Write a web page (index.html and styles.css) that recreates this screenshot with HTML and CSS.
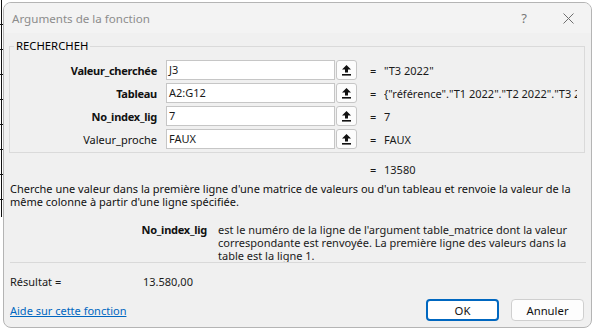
FILE: index.html
```html
<!DOCTYPE html>
<html lang="fr">
<head>
    <meta charset="UTF-8">
    <title>Arguments de la fonction</title>
    <link rel="stylesheet" href="styles.css">
</head>
<body>
    <div class="screen">
        <div class="sheet-edge"></div>

        <div class="dialog">
            <div class="title-bar">
                <span class="title">Arguments de la fonction</span>
                <span class="title-btn help">?</span>
                <span class="title-btn close">
                    <svg width="11" height="11" viewBox="0 0 11 11"><path d="M0.5 0.5 L10.5 10.5 M10.5 0.5 L0.5 10.5" stroke="#6e6e6e" stroke-width="1" fill="none"/></svg>
                </span>
            </div>

            <div class="body">
                <fieldset class="group">
                    <legend>RECHERCHEH</legend>

                    <div class="arg-row">
                        <label class="arg-label bold">Valeur_cherchée</label>
                        <div class="field"><span class="input">J3</span><span class="ref-btn"><svg width="11" height="12" viewBox="0 0 11 12"><path d="M5.5 1 L10 5.5 H7 V8.5 H4 V5.5 H1 Z" fill="#111"/><rect x="1" y="10" width="9" height="1.6" fill="#111"/></svg></span></div>
                        <span class="eq">=</span>
                        <span class="value">"T3 2022"</span>
                    </div>

                    <div class="arg-row">
                        <label class="arg-label bold">Tableau</label>
                        <div class="field"><span class="input">A2:G12</span><span class="ref-btn"><svg width="11" height="12" viewBox="0 0 11 12"><path d="M5.5 1 L10 5.5 H7 V8.5 H4 V5.5 H1 Z" fill="#111"/><rect x="1" y="10" width="9" height="1.6" fill="#111"/></svg></span></div>
                        <span class="eq">=</span>
                        <span class="value">{"référence"."T1 2022"."T2 2022"."T3 20</span>
                    </div>

                    <div class="arg-row">
                        <label class="arg-label bold">No_index_lig</label>
                        <div class="field"><span class="input">7</span><span class="ref-btn"><svg width="11" height="12" viewBox="0 0 11 12"><path d="M5.5 1 L10 5.5 H7 V8.5 H4 V5.5 H1 Z" fill="#111"/><rect x="1" y="10" width="9" height="1.6" fill="#111"/></svg></span></div>
                        <span class="eq">=</span>
                        <span class="value">7</span>
                    </div>

                    <div class="arg-row">
                        <label class="arg-label">Valeur_proche</label>
                        <div class="field"><span class="input">FAUX</span><span class="ref-btn"><svg width="11" height="12" viewBox="0 0 11 12"><path d="M5.5 1 L10 5.5 H7 V8.5 H4 V5.5 H1 Z" fill="#111"/><rect x="1" y="10" width="9" height="1.6" fill="#111"/></svg></span></div>
                        <span class="eq">=</span>
                        <span class="value">FAUX</span>
                    </div>
                </fieldset>

                <div class="result-row">
                    <span class="eq">=</span>
                    <span class="value">13580</span>
                </div>

                <p class="summary">Cherche une valeur dans la première ligne d'une matrice de valeurs ou d'un tableau et renvoie la valeur de la même colonne à partir d'une ligne spécifiée.</p>

                <div class="arg-help">
                    <span class="arg-help-name">No_index_lig</span>
                    <span class="arg-help-text">est le numéro de la ligne de l'argument table_matrice dont la valeur correspondante est renvoyée. La première ligne des valeurs dans la table est la ligne 1.</span>
                </div>

                <div class="separator"></div>

                <div class="final-row">
                    <span class="final-label">Résultat =</span>
                    <span class="final-value">13.580,00</span>
                </div>

                <div class="footer">
                    <a class="help-link" href="#">Aide sur cette fonction</a>
                    <button class="btn primary">OK</button>
                    <button class="btn">Annuler</button>
                </div>
            </div>
        </div>
    </div>
</body>
</html>
```

FILE: styles.css
```css
html, body {
    margin: 0;
    padding: 0;
    background: #ffffff;
}
body {
    font-family: "Noto Sans", "Open Sans", sans-serif;
    font-size: 11px;
    color: #1a1a1a;
    width: 594px;
    height: 328px;
    overflow: hidden;
}
.screen {
    display: flex;
    align-items: flex-start;
    height: 328px;
}
.sheet-edge {
    width: 3px;
    height: 217px;
    flex-shrink: 0;
    background:
        linear-gradient(to right, transparent 1px, #111 1px, #111 2px, transparent 2px),
        repeating-linear-gradient(to bottom, transparent 0, transparent 24px, #111 24px, #111 25px);
}
.dialog {
    width: 587px;
    height: 324px;
    margin-top: 2px;
    border: 1px solid #b4b4b4;
    border-radius: 8px;
    background: #f0f0f0;
    overflow: hidden;
    display: flex;
    flex-direction: column;
}
.title-bar {
    height: 30px;
    background: #f3f3f3;
    display: flex;
    align-items: center;
    padding-left: 8px;
    flex-shrink: 0;
}
.title {
    color: #8c8c8c;
    font-size: 11.6px;
    flex: 1;
}
.title-btn {
    color: #777;
    display: flex;
    align-items: center;
    justify-content: center;
}
.help {
    font-size: 13px;
    margin-right: 36px;
}
.close {
    margin-right: 17px;
}
.body {
    padding: 0 5px;
    display: flex;
    flex-direction: column;
}
.group {
    margin: 5px 0 0 0;
    padding: 0 0 3px 0;
    border: 1px solid #dadada;
    width: 574px;
}
.group legend {
    margin-left: 4px;
    padding: 0 2px;
    color: #000;
    font-size: 11.3px;
    line-height: 16px;
}
.arg-row {
    display: flex;
    align-items: center;
    height: 20px;
    margin-top: 3px;
}
.arg-row:first-of-type {
    margin-top: 6px;
}
.arg-label {
    width: 147px;
    margin-right: 9px;
    text-align: right;
    color: #111;
}
.bold {
    font-weight: bold;
    letter-spacing: -0.25px;
}
.field {
    display: flex;
    width: 191px;
    height: 20px;
}
.input {
    width: 167px;
    height: 18px;
    line-height: 18px;
    padding-left: 2px;
    background: #fff;
    border: 1px solid #c6c6c6;
}
.ref-btn {
    width: 19px;
    height: 18px;
    margin-left: 1px;
    border: 1px solid #c6c6c6;
    border-radius: 3px;
    background: #fcfcfc;
    display: flex;
    align-items: center;
    justify-content: center;
}
.eq {
    width: 14px;
    margin-left: 13px;
}
.value {
    width: 193px;
    white-space: nowrap;
    overflow: hidden;
}
.result-row {
    display: flex;
    padding-left: 348px;
    margin-top: 9px;
    line-height: 16px;
}
.summary {
    margin: 4px 0 0 1px;
    line-height: 13px;
    color: #111;
}
.arg-help {
    display: flex;
    margin-top: 15px;
    line-height: 13px;
}
.arg-help-name {
    width: 198px;
    text-align: right;
    font-weight: bold;
    letter-spacing: -0.25px;
    color: #111;
}
.arg-help-text {
    width: 352px;
    margin-left: 11px;
}
.separator {
    height: 1px;
    background: #d9d9d9;
    margin: 0 0 0 1px;
    width: 576px;
}
.final-row {
    display: flex;
    margin-top: 11px;
    line-height: 16px;
}
.final-label {
    width: 133px;
    padding-left: 1px;
}
.footer {
    display: flex;
    align-items: center;
    margin-top: 9px;
}
.help-link {
    color: #0067c0;
    flex: 1;
    padding-left: 1px;
}
.btn {
    width: 73px;
    height: 22px;
    margin-right: 2px;
    margin-left: 10px;
    font-family: inherit;
    font-size: 11.3px;
    color: #111;
    background: #fdfdfd;
    border: 1px solid #cfcfcf;
    border-radius: 4px;
}
.btn.primary {
    border: 2px solid #0067c0;
    background: #fff;
}
```
